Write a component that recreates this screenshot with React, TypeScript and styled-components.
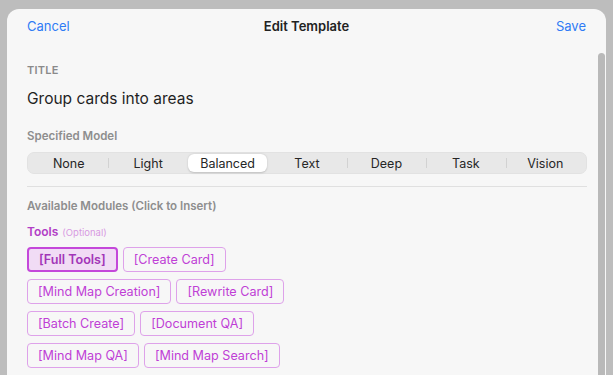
import React from 'react';
import styled, { createGlobalStyle } from 'styled-components';

const GlobalStyle = createGlobalStyle`
  html, body {
    margin: 0;
    padding: 0;
    background: #bdbdbd;
    overflow: hidden;
  }
  body {
    font-family: 'Inter', 'Liberation Sans', sans-serif;
    -webkit-font-smoothing: antialiased;
  }
`;

const Sheet = styled.div`
  position: relative;
  margin: 9px 7px 0 7px;
  height: 366px;
  background: #f7f7f7;
  border-radius: 12px 12px 0 0;
  overflow: hidden;
`;

const Header = styled.div`
  height: 34px;
  display: grid;
  grid-template-columns: 1fr auto 1fr;
  align-items: center;
  padding: 0 20px;
`;

const NavButton = styled.button<{ $align?: 'left' | 'right' }>`
  border: none;
  background: none;
  padding: 0;
  font-family: inherit;
  font-size: 13px;
  color: #2f7bf5;
  justify-self: ${(p) => (p.$align === 'right' ? 'end' : 'start')};
`;

const HeaderTitle = styled.div`
  font-size: 13px;
  font-weight: 600;
  color: #222;
`;

const Content = styled.div`
  padding: 20px 19px 0 20px;
`;

const SectionLabel = styled.div`
  font-size: 11px;
  line-height: 14px;
  font-weight: 600;
  letter-spacing: 0.02em;
  color: #8a8a8a;
`;

const TitleText = styled.div`
  margin-top: 12px;
  font-size: 15.5px;
  line-height: 20px;
  color: #1f1f1f;
`;

const FieldLabel = styled.div<{ $mt?: number }>`
  margin-top: ${(p) => p.$mt ?? 0}px;
  font-size: 11.5px;
  line-height: 15px;
  font-weight: 600;
  color: #8e8e8e;
`;

const Segmented = styled.div`
  margin-top: 8px;
  height: 22px;
  display: grid;
  grid-template-columns: repeat(7, 1fr);
  background: #e8e8e8;
  border: 1px solid #e2e2e2;
  box-sizing: border-box;
  border-radius: 7px;
  padding: 1px;
`;

const Segment = styled.div<{ $active?: boolean; $divider?: boolean }>`
  position: relative;
  display: flex;
  align-items: center;
  justify-content: center;
  font-size: 12.5px;
  color: #262626;
  border-radius: 6px;
  background: ${(p) => (p.$active ? '#fff' : 'transparent')};
  box-shadow: ${(p) => (p.$active ? '0 0.5px 2px rgba(0,0,0,0.18)' : 'none')};
  &::before {
    content: '';
    display: ${(p) => (p.$divider ? 'block' : 'none')};
    position: absolute;
    left: 0;
    top: 4px;
    bottom: 4px;
    width: 1px;
    background: #d2d2d2;
  }
`;

const Divider = styled.div`
  margin-top: 12px;
  height: 1px;
  background: #e0e0e0;
`;

const GroupLabel = styled.div`
  margin-top: 10px;
  display: flex;
  align-items: baseline;
  gap: 4px;
  font-size: 12px;
  line-height: 15px;
  font-weight: 600;
  color: #b23ec6;
`;

const Optional = styled.span`
  font-size: 9.5px;
  font-weight: 400;
  color: #d79ae2;
`;

const Chips = styled.div`
  margin-top: 7px;
  display: flex;
  flex-wrap: wrap;
  gap: 7px 5px;
  width: 265px;
`;

const Chip = styled.button<{ $active?: boolean }>`
  height: 25px;
  box-sizing: border-box;
  padding: 0 10px;
  font-family: inherit;
  font-size: 12.6px;
  font-weight: ${(p) => (p.$active ? 600 : 400)};
  color: ${(p) => (p.$active ? '#a236b8' : '#bf3fd6')};
  background: ${(p) => (p.$active ? '#f1dcf5' : 'transparent')};
  border: ${(p) => (p.$active ? '2px solid #c448da' : '1px solid #dea2ea')};
  border-radius: 4px;
  white-space: nowrap;
`;

const ScrollThumb = styled.div`
  position: absolute;
  right: 1px;
  top: 44px;
  width: 7px;
  height: 340px;
  border-radius: 4px;
  background: #b9b9b9;
`;

const models = ['None', 'Light', 'Balanced', 'Text', 'Deep', 'Task', 'Vision'];
const activeModel = 'Balanced';

const tools = [
  { label: '[Full Tools]', active: true },
  { label: '[Create Card]' },
  { label: '[Mind Map Creation]' },
  { label: '[Rewrite Card]' },
  { label: '[Batch Create]' },
  { label: '[Document QA]' },
  { label: '[Mind Map QA]' },
  { label: '[Mind Map Search]' },
];

export default function App() {
  const activeIdx = models.indexOf(activeModel);
  return (
    <>
      <GlobalStyle />
      <Sheet>
        <Header>
          <NavButton>Cancel</NavButton>
          <HeaderTitle>Edit Template</HeaderTitle>
          <NavButton $align="right">Save</NavButton>
        </Header>
        <Content>
          <SectionLabel>TITLE</SectionLabel>
          <TitleText>Group cards into areas</TitleText>
          <FieldLabel $mt={20}>Specified Model</FieldLabel>
          <Segmented>
            {models.map((m, i) => (
              <Segment
                key={m}
                $active={i === activeIdx}
                $divider={i > 0 && i !== activeIdx && i !== activeIdx + 1}
              >
                {m}
              </Segment>
            ))}
          </Segmented>
          <Divider />
          <FieldLabel $mt={12}>Available Modules (Click to Insert)</FieldLabel>
          <GroupLabel>
            Tools <Optional>(Optional)</Optional>
          </GroupLabel>
          <Chips>
            {tools.map((t) => (
              <Chip key={t.label} $active={t.active}>
                {t.label}
              </Chip>
            ))}
          </Chips>
        </Content>
        <ScrollThumb />
      </Sheet>
    </>
  );
}
